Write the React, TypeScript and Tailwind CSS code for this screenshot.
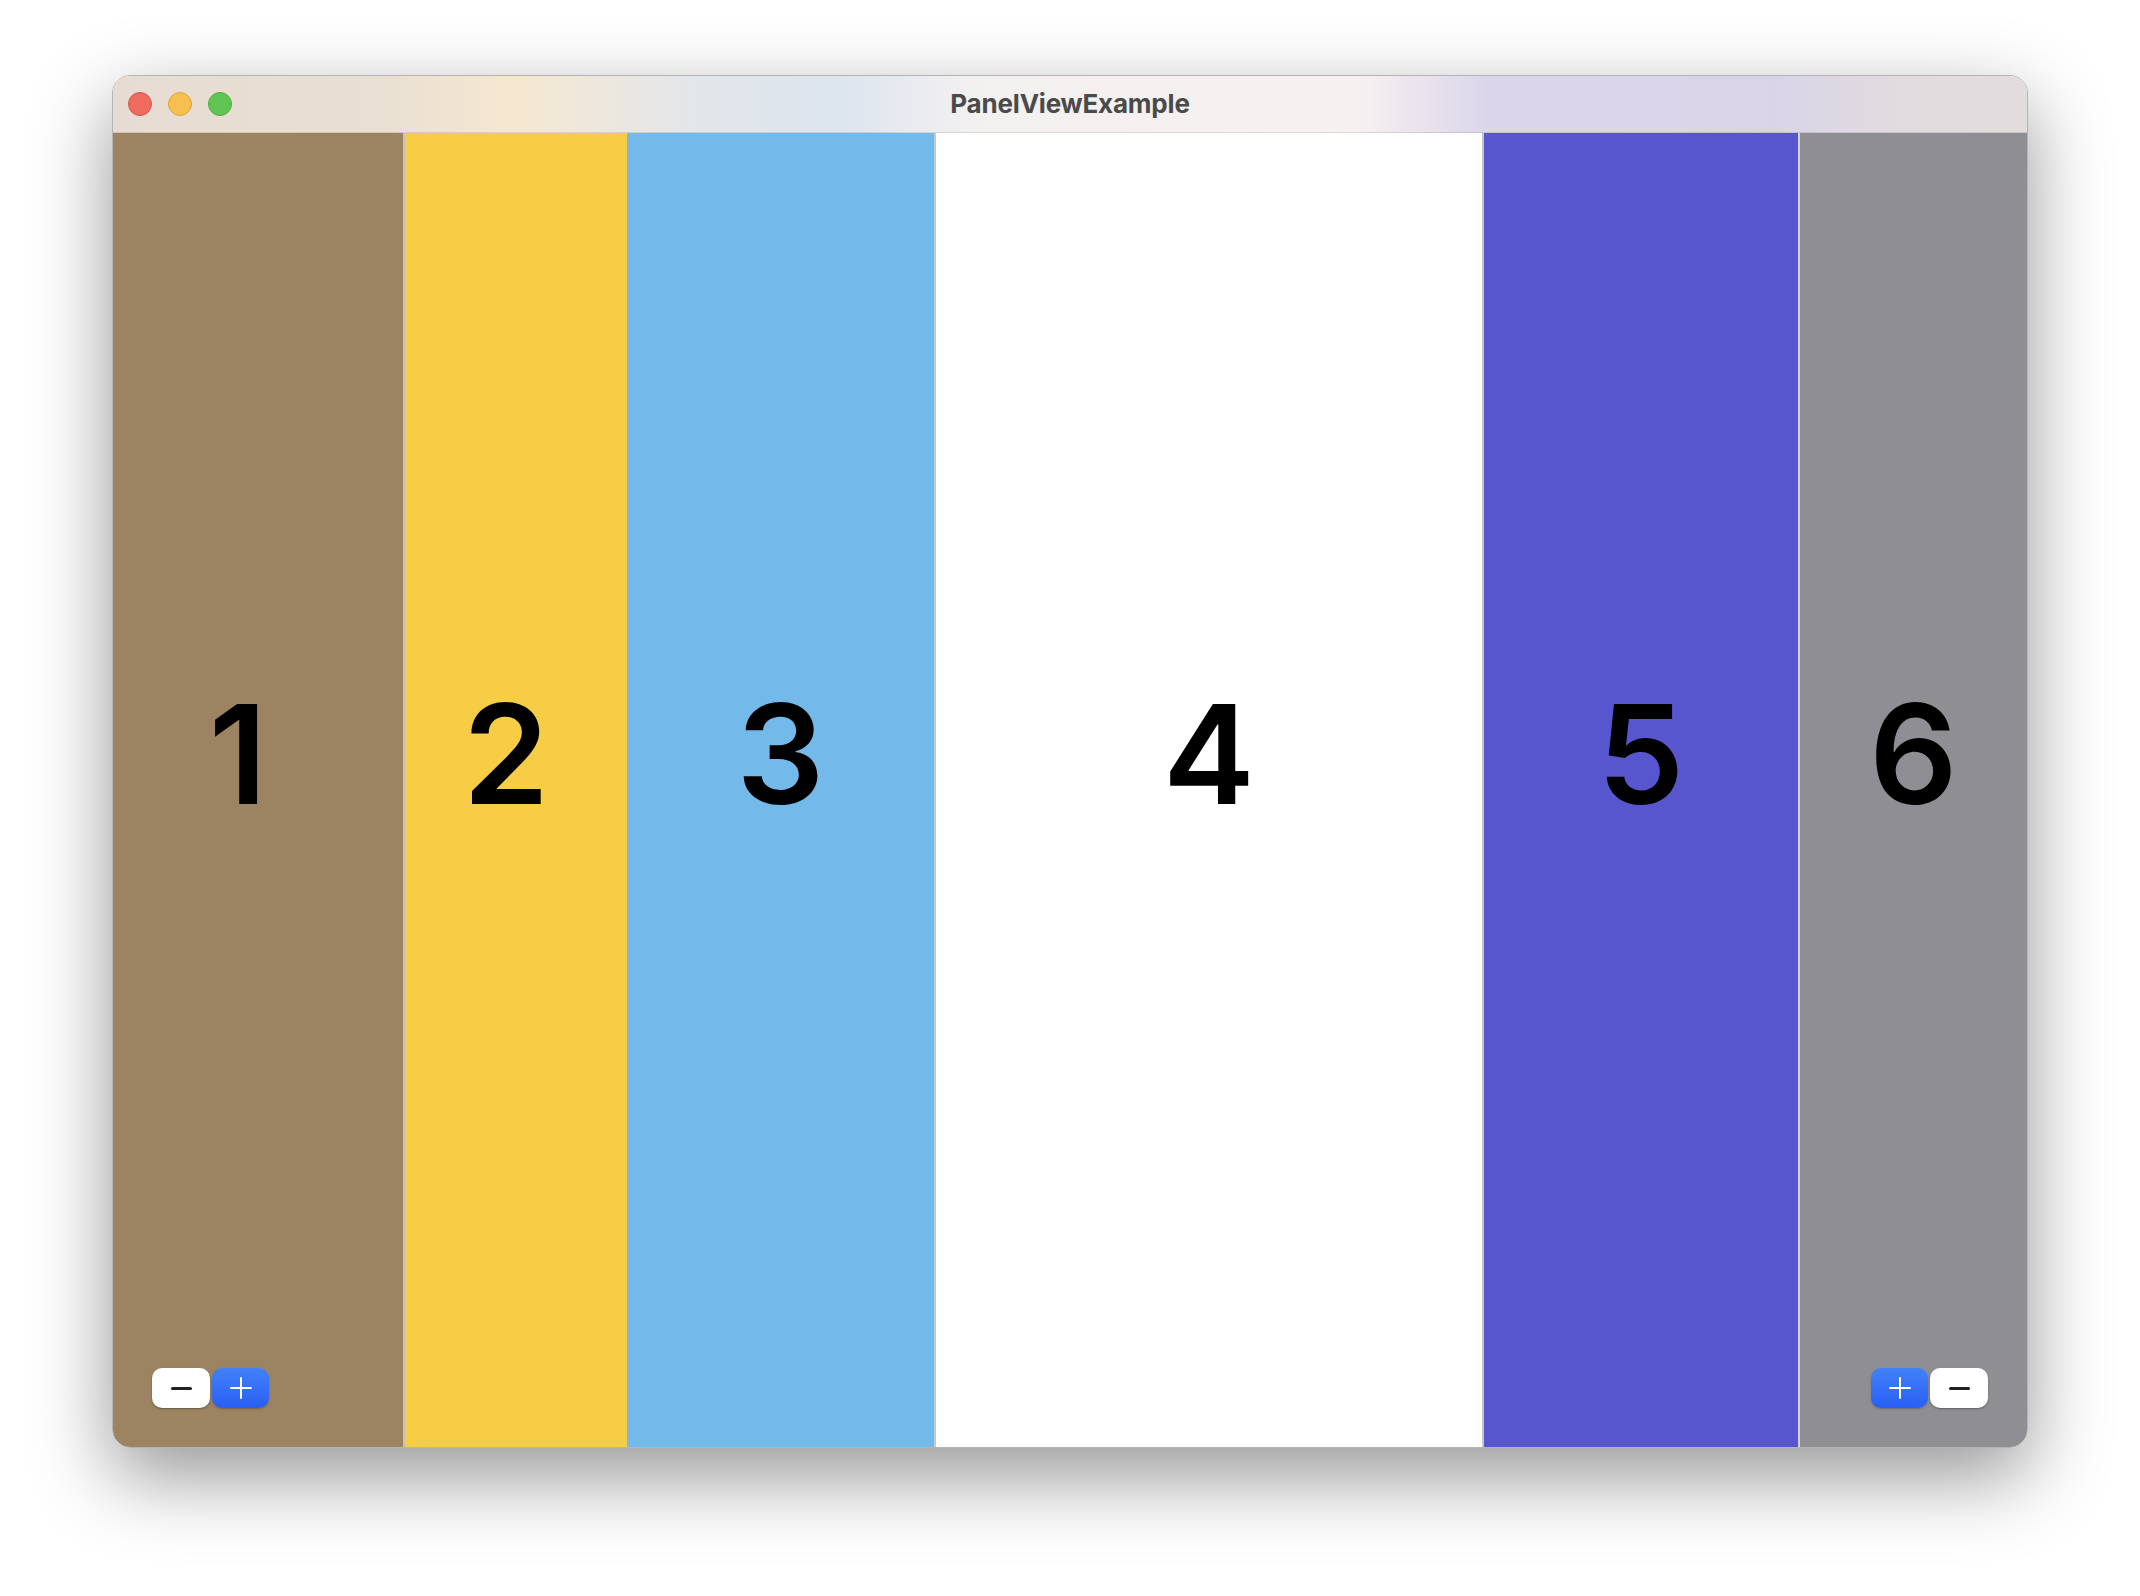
import React from 'react'

const panels = [
  { n: '1', w: 'w-[292px]', bg: 'bg-[#9c8462]', edge: 'border-r-2 border-[#c9c4bb]', shift: 'pr-[40px]' },
  { n: '2', w: 'w-[222px]', bg: 'bg-[#f7cd46]', edge: '', shift: 'pr-[20px]' },
  { n: '3', w: 'w-[309px]', bg: 'bg-[#73b9ea]', edge: 'border-r-2 border-[#c6c6c6]', shift: '' },
  { n: '4', w: 'w-[548px]', bg: 'bg-white', edge: 'border-r-2 border-[#c6c6c6]', shift: '' },
  { n: '5', w: 'w-[316px]', bg: 'bg-[#5756ce]', edge: 'border-r-2 border-[#d2d2d8]', shift: '' },
  { n: '6', w: 'flex-1', bg: 'bg-[#8f8e93]', edge: '', shift: '' },
]

function Minus() {
  return (
    <button className="flex h-[40px] w-[58px] items-center justify-center rounded-[10px] bg-white shadow-[0_1px_2px_rgba(0,0,0,0.35)]">
      <span className="h-[3px] w-[21px] rounded-full bg-[#222]" />
    </button>
  )
}

function Plus() {
  return (
    <button className="flex h-[40px] w-[57px] items-center justify-center rounded-[10px] bg-gradient-to-b from-[#4281f8] to-[#2a5ef5] shadow-[0_1px_2px_rgba(0,0,0,0.25)]">
      <svg width="22" height="22" viewBox="0 0 22 22">
        <path d="M11 1v20M1 11h20" stroke="white" strokeWidth="2" strokeLinecap="round" />
      </svg>
    </button>
  )
}

export default function App() {
  return (
    <div className="min-h-[1596px] w-[2140px] bg-white pl-[112px] pt-[75px] font-['Inter',sans-serif]">
      <div className="flex h-[1373px] w-[1916px] flex-col overflow-hidden rounded-[18px] border border-[#b4b4b4] shadow-[0_28px_80px_rgba(0,0,0,0.42)]">
        <div className="relative flex h-[57px] shrink-0 items-center border-b border-black/10 bg-[linear-gradient(90deg,#e7dcd3_0%,#e9dfd3_14%,#f6e8d0_21%,#e3e6ea_30%,#dde5ef_38%,#f3f0f0_45%,#f6f1f0_65%,#dad5ea_72%,#d9d4e8_87%,#e1dbdf_93%,#e2dcdd_100%)]">
          <div className="flex gap-[16px] pl-[15px]">
            <span className="h-[24px] w-[24px] rounded-full border border-[#d5544a] bg-[#ef6b60]" />
            <span className="h-[24px] w-[24px] rounded-full border border-[#dca53e] bg-[#f6bf50]" />
            <span className="h-[24px] w-[24px] rounded-full border border-[#50a943] bg-[#61c554]" />
          </div>
          <div className="absolute inset-0 flex items-center justify-center pb-[2px] text-[26px] font-bold tracking-[-0.2px] text-[#4b4a4a]">
            PanelViewExample
          </div>
        </div>
        <div className="flex flex-1">
          {panels.map((p, i) => (
            <div key={p.n} className={`flex flex-col ${p.w} ${p.bg} ${p.edge}`}>
              <div className={`flex flex-1 items-center justify-center pt-[6px] ${p.shift}`}>
                <span className="text-[138px] font-semibold leading-none text-black">{p.n}</span>
              </div>
              <div className="flex h-[79px] shrink-0 items-start px-[39px]">
                {i === 0 && (
                  <div className="flex gap-[2px]">
                    <Minus />
                    <Plus />
                  </div>
                )}
                {i === 5 && (
                  <div className="ml-auto flex gap-[2px]">
                    <Plus />
                    <Minus />
                  </div>
                )}
              </div>
            </div>
          ))}
        </div>
      </div>
    </div>
  )
}
